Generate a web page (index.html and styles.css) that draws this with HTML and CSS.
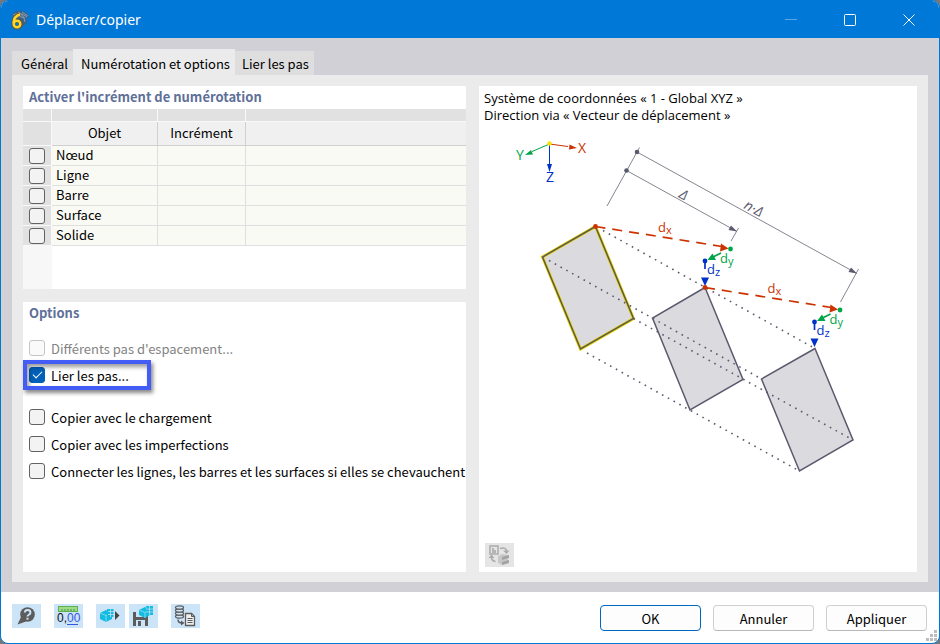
FILE: index.html
```html
<!DOCTYPE html>
<html lang="fr">
<head>
<meta charset="utf-8">
<title>Déplacer/copier</title>
<link rel="stylesheet" href="styles.css">
</head>
<body>
<div class="window">
  <header class="titlebar">
    <svg class="app-icon" viewBox="0 0 20 20" aria-hidden="true">
      <path d="M2 5 Q6 0 12 1 L17 3 L20 8 L16 7 L17 13 L12 17 L8 12 Z" fill="#3d6186"/>
      <path d="M3 5 Q9 1 17 7 M8 2 Q14 5 15 12 M4 8 Q10 5 15 8 M12 2L18 6" stroke="#8b9da8" fill="none"/>
      <path d="M9.500 4.500 Q4 6 3.500 13" stroke="#5d5630" stroke-width="4" fill="none"/>
      <circle cx="7" cy="14" r="3.500" stroke="#5d5630" stroke-width="4" fill="none"/>
      <path d="M10 4.500 Q4 6 3.500 13" stroke="#ffd52c" stroke-width="2.500" fill="none"/>
      <circle cx="7" cy="14" r="3.300" stroke="#ffd52c" stroke-width="2.500" fill="none"/>
    </svg>
    <h1>Déplacer/copier</h1>
    <div class="window-controls">
      <button type="button" aria-label="Réduire" disabled><svg viewBox="0 0 12 12"><path d="M0 5.500H12" opacity=".35"/></svg></button>
      <button type="button" aria-label="Agrandir"><svg viewBox="0 0 12 12"><rect x=".5" y=".5" width="11" height="11" rx="1"/></svg></button>
      <button type="button" aria-label="Fermer"><svg viewBox="0 0 12 12"><path d="M.5 .5L11.500 11.500M11.500 .5L.5 11.500"/></svg></button>
    </div>
  </header>

  <main class="content">
    <nav class="tabs" role="tablist">
      <button type="button" role="tab" class="tab">Général</button>
      <button type="button" role="tab" class="tab tab-active" aria-selected="true">Numérotation et options</button>
      <button type="button" role="tab" class="tab tab-last">Lier les pas</button>
    </nav>
    <div class="page">
      <div class="column">
        <section class="box">
          <h2>Activer l'incrément de numérotation</h2>
          <table class="grid">
            <colgroup><col class="col-check"><col class="col-object"><col class="col-step"><col></colgroup>
            <thead>
              <tr class="letters"><td></td><td></td><td></td><td></td></tr>
              <tr class="names"><td></td><th scope="col">Objet</th><th scope="col">Incrément</th><td></td></tr>
            </thead>
            <tbody>
              <tr><td><input type="checkbox" id="node"></td><td><label for="node">Nœud</label></td><td></td><td></td></tr>
              <tr><td><input type="checkbox" id="line"></td><td><label for="line">Ligne</label></td><td></td><td></td></tr>
              <tr><td><input type="checkbox" id="member"></td><td><label for="member">Barre</label></td><td></td><td></td></tr>
              <tr><td><input type="checkbox" id="surface"></td><td><label for="surface">Surface</label></td><td></td><td></td></tr>
              <tr><td><input type="checkbox" id="solid"></td><td><label for="solid">Solide</label></td><td></td><td></td></tr>
            </tbody>
          </table>
          <div class="grid-rest"></div>
        </section>
        <section class="box box-options">
          <h2>Options</h2>
          <div class="options">
            <label class="option option-disabled"><input type="checkbox" disabled>Différents pas d'espacement...</label>
            <label class="option option-marked"><input type="checkbox" checked>Lier les pas...</label>
          </div>
          <div class="options">
            <label class="option"><input type="checkbox">Copier avec le chargement</label>
            <label class="option"><input type="checkbox">Copier avec les imperfections</label>
            <label class="option"><input type="checkbox">Connecter les lignes, les barres et les surfaces si elles se chevauchent</label>
          </div>
        </section>
      </div>

      <section class="box preview">
        <p>Système de coordonnées « 1 - Global XYZ »</p>
        <p>Direction via « Vecteur de déplacement »</p>
        <svg class="diagram" viewBox="479 125 438 380" role="img" aria-label="Vecteur de déplacement">
          <g fill="none" stroke-width="1">
            <path d="M549.500 144L568 146.500" stroke="#cc3300"/>
            <path d="M549.500 144L532 151.500" stroke="#00a548"/>
            <path d="M549.500 144V165" stroke="#0032c8"/>
          </g>
          <path d="M577 148L569 149.500L569.500 144.500Z" fill="#cc3300"/>
          <path d="M525 155L531 150L533 154.500Z" fill="#00a548"/>
          <path d="M549.500 172L547 164H552Z" fill="#0032c8"/>
          <circle cx="549.500" cy="143.500" r="2.200" fill="#ffe000"/>
          <g class="axis-label">
            <text x="578" y="153" fill="#cc3300">X</text>
            <text x="516" y="160" fill="#00a548">Y</text>
            <text x="546" y="182" fill="#0032c8">Z</text>
          </g>

          <path d="M607 206L639.500 147.500M637 152L857 273.500M626.500 170.500L737 231.500M738.500 228L731 241M858.500 269L840.500 302" stroke="#858592" fill="none"/>
          <g fill="#5a5a6e">
            <circle cx="637" cy="152" r="2.300"/><circle cx="626.500" cy="170.500" r="2.300"/>
            <path d="M737 231.500L728.500 230L731 225.500Z"/>
            <path d="M857 273.500L848.500 272L851 267.500Z"/>
          </g>
          <g class="dim-label">
            <text transform="translate(678 197) rotate(29)">Δ</text>
            <text transform="translate(743 208) rotate(29)">n·Δ</text>
          </g>

          <path d="M595.500 226.500L542.500 257L580.500 349L633.500 318.500Z" fill="#dbdade" stroke="#ead600" stroke-width="3"/>
          <path d="M595.500 226.500L542.500 257L580.500 349L633.500 318.500Z" fill="none" stroke="#5a5a50" stroke-width="1.500"/>
          <path d="M705 287.500L652.500 318L690 410L743 379.500Z" class="copy"/>
          <path d="M815 348.500L761.500 379L799.500 471L853 440Z" class="copy"/>
          <path d="M603 230.500L815 348.500M549 260.500L761.500 379M633.500 318.500L853 440M587 353L799.500 471" class="trace"/>

          <g id="step">
            <path d="M595.500 226.500L722 246.500" stroke="#cc3300" stroke-width="1.700" stroke-dasharray="10 7" fill="none"/>
            <path d="M728.500 248.500L720 251.500L721 243.500Z" fill="#cc3300"/>
            <circle cx="595.500" cy="226.500" r="2.400" fill="#cc3300"/>
            <path d="M721 253L713 257" stroke="#00a548" stroke-width="1.700"/>
            <path d="M707.500 260L712.500 253.500L716 260Z" fill="#00a548"/>
            <circle cx="730.500" cy="249" r="2.400" fill="#00a548"/>
            <path d="M705 261V269" stroke="#0032c8" stroke-width="1.700"/>
            <path d="M705 286L701 277.500H709Z" fill="#0032c8"/>
            <circle cx="705" cy="261" r="2.400" fill="#0032c8"/>
            <g class="vector-label">
              <text x="658" y="232" fill="#cc3300">d<tspan class="sub" dy="2">x</tspan></text>
              <text x="720" y="263" fill="#00a548">d<tspan class="sub" dy="2">y</tspan></text>
              <text x="707" y="274" fill="#0032c8">d<tspan class="sub" dy="2">z</tspan></text>
            </g>
          </g>
          <use href="#step" transform="translate(109.500 61)"/>
        </svg>
        <button type="button" class="tool tool-view" aria-label="Changer l'image" disabled>
          <svg viewBox="0 0 29 24">
            <rect x="5" y="3" width="8" height="8" fill="#e5e5e5" stroke="#ababab" stroke-width="1.500"/>
            <path d="M7 10V5H9V7H11V10Z" fill="#b4b4b4"/>
            <path d="M15 5.500Q21.500 4 21.500 8M10.500 18.500Q6.500 18 6.500 14" fill="none" stroke="#ababab" stroke-width="1.500"/>
            <path d="M18 7.500H24.500L21.500 11ZM3.500 15L6.500 11.500L9.500 15Z" fill="#ababab"/>
            <path d="M13 13L17 11L23 12V20L17 22L13 20Z" fill="#c7c7c7"/>
            <path d="M17 14L24 12V15L17 17ZM17 19L24 17V20L17 22Z" fill="#a3a3a3"/>
          </svg>
        </button>
      </section>
    </div>
  </main>

  <footer class="footer">
    <div class="tools">
      <button type="button" class="tool" aria-label="Aide">
        <svg viewBox="0 0 29 24">
          <path d="M5.500 20.500L9 13L14 17.500Z" fill="#5c5c5c"/><circle cx="15.500" cy="10.500" r="7.300" fill="#5c5c5c"/>
          <path d="M12.800 8.500Q13 6 15.500 6Q18.500 6 18.500 8.500Q18.500 10 16.500 11Q15.500 11.500 15.500 12.500" fill="none" stroke="#cce4f7" stroke-width="1.900"/>
          <rect x="14.500" y="13.700" width="2" height="2" fill="#cce4f7"/>
        </svg>
      </button>
      <button type="button" class="tool" aria-label="Unités et décimales">
        <svg viewBox="0 0 29 24">
          <rect x="4.500" y="2.500" width="19" height="5" fill="#9edb8b" stroke="#5faf4d"/>
          <path d="M8 5V7M11 5V7M14 5V7M17 5V7M20 5V7" stroke="#42963b"/>
          <text x="3" y="18" class="digits" fill="#111">0,</text><text x="13" y="18" class="digits" fill="#3556df">00</text>
          <path d="M13 20.500H24" stroke="#3556df"/>
        </svg>
      </button>
      <button type="button" class="tool" aria-label="Valeurs par défaut">
        <svg viewBox="0 0 29 24">
          <path d="M4 9L10 6L16 9V15L10 18L4 15Z" fill="#13bce0"/><path d="M4 9L10 11.500L16 9M10 11.500V18" stroke="#79d9ed" fill="none"/>
          <path d="M11 5H17.500V13H11Z" fill="#13bce0"/><path d="M12 7.500H18M12 10.500H18M14.500 5V13" stroke="#cce4f7" stroke-width=".7"/>
          <path d="M19 7L23.500 11.500L19 16Z" fill="#444"/>
        </svg>
      </button>
      <button type="button" class="tool tool-joined" aria-label="Enregistrer par défaut">
        <svg viewBox="0 0 29 24">
          <path d="M4 8H17L19 10V22H4Z" fill="#5c5c5c"/><path d="M7 8H14V13H7Z" fill="#cce4f7"/><path d="M7 16H16V22H7Z" fill="#cce4f7"/><path d="M9 17H12V22H9Z" fill="#5c5c5c"/>
          <path d="M10 6L16 3L21 6V11L16 14L10 11Z" fill="#13bce0"/><path d="M10 6L16 8.500L21 6M16 8V14" stroke="#79d9ed" fill="none"/>
          <path d="M17 2H24V11H19Z" fill="#13bce0"/><path d="M17 5H24M18 8H24M20.500 2V11" stroke="#cce4f7" stroke-width=".7"/>
        </svg>
      </button>
      <button type="button" class="tool" aria-label="Copier les données">
        <svg viewBox="0 0 29 24">
          <g fill="#cce4f7" stroke="#5c5c5c" stroke-width="1.300"><ellipse cx="8.500" cy="12.500" rx="4" ry="1.600"/><ellipse cx="8.500" cy="9.500" rx="4" ry="1.600"/><ellipse cx="8.500" cy="6.500" rx="4" ry="1.600"/><ellipse cx="8.500" cy="3.500" rx="4" ry="1.600"/></g>
          <path d="M7 15.500Q7 19 11 19" fill="none" stroke="#5c5c5c" stroke-width="1.500"/><path d="M10 16.500L13.500 19L10 21.500Z" fill="#5c5c5c"/>
          <path d="M14.500 9.500H20.500L23.500 12.500V21.500H14.500Z" fill="#eee" stroke="#5c5c5c" stroke-width="1.300"/><path d="M16.500 14.500H21.500M16.500 16.500H21.500M16.500 18.500H21.500M20.500 9.500V12.500H23.500" stroke="#5c5c5c" fill="none"/>
        </svg>
      </button>
    </div>
    <div class="actions">
      <button type="button" class="action action-default">OK</button>
      <button type="button" class="action">Annuler</button>
      <button type="button" class="action">Appliquer</button>
    </div>
    <svg class="grip" viewBox="0 0 11 11" aria-hidden="true"><path d="M8 0h3v3h-3zM4 4h3v3h-3zM8 4h3v3h-3zM0 8h3v3h-3zM4 8h3v3h-3zM8 8h3v3h-3z" fill="#bdbdbd"/></svg>
  </footer>
</div>
</body>
</html>
```
FILE: styles.css
```css
* { box-sizing: border-box; }

body {
  margin: 0;
  background: #77777a;
  color: #000;
  font: 13px/17px "Noto Sans CJK JP", "Noto Sans", sans-serif;
}

h1, h2, p { margin: 0; }

button { font: inherit; color: inherit; }

.window {
  display: flex;
  flex-direction: column;
  min-height: 100vh;
  border: 1px solid #0078d4;
  border-radius: 8px;
  background: #fff;
  overflow: hidden;
}

/* Title bar */
.titlebar {
  display: flex;
  align-items: center;
  height: 37px;
  padding: 0 1px 0 9px;
  background: #0078d7;
  color: #fff;
}
.app-icon { width: 20px; height: 20px; }
.titlebar h1 { margin-left: 6px; font: 400 14px/17px "Noto Sans", sans-serif; }
.window-controls { display: flex; margin-left: auto; }
.window-controls button {
  display: grid;
  place-items: center;
  width: 59px;
  height: 36px;
  padding: 0;
  border: 0;
  background: none;
}
.window-controls svg { width: 12px; height: 12px; fill: none; stroke: #fff; }

/* Tabs and page */
.content {
  flex: 1;
  display: flex;
  flex-direction: column;
  padding: 11px 11px 10px;
  background: #d1d0d6;
}
.tabs { display: flex; align-items: flex-end; margin-bottom: -1px; }
.tab {
  height: 25px;
  padding: 0 5px 0 9px;
  border: 0;
  background: #dedede;
  white-space: nowrap;
}
.tab-active { height: 27px; padding-top: 2px; padding-left: 8px; background: #ebebeb; }
.tab-last { padding-left: 7px; }
.page {
  flex: 1;
  display: grid;
  grid-template-columns: minmax(0, 443fr) minmax(0, 438fr);
  gap: 13px;
  padding: 11px 11px 10px;
  background: #ebebeb;
}
.column { display: flex; flex-direction: column; gap: 13px; }
.box { background: #fff; }
.box-options { flex: 1; }
.box h2 {
  height: 23px;
  padding-left: 6px;
  color: #5f7099;
  font-size: 13px;
  font-weight: 700;
  line-height: 21px;
}

/* Check boxes */
input[type="checkbox"] {
  appearance: none;
  display: grid;
  place-items: center;
  flex: none;
  width: 16px;
  height: 16px;
  margin: 0;
  border: 1px solid #626262;
  border-radius: 3px;
  background: #f3f3f3;
}
input[type="checkbox"]:disabled { border-color: #c5c5c5; background: #fafafa; }
input[type="checkbox"]:checked { border-color: #005fb8; background: #005fb8; }
input[type="checkbox"]:checked::before {
  content: "";
  width: 8px;
  height: 4px;
  margin-bottom: 2px;
  border: solid #fff;
  border-width: 0 0 1px 1px;
  transform: rotate(-45deg);
}

/* Numbering table */
.grid {
  width: 100%;
  table-layout: fixed;
  border-collapse: separate;
  border-spacing: 0;
}
.col-check { width: 29px; }
.col-object { width: 106px; }
.col-step { width: 88px; }
.grid th, .grid td {
  padding: 0;
  border: solid #dfdfdf;
  border-width: 0 1px 1px 0;
  background: #fafaf4;
  font-weight: 400;
}
.grid th { padding-bottom: 2px; }
.grid tr > :last-child { border-right: 0; }
.grid .letters td { height: 13px; border-color: #f9f9f9; background: #e1e1e1; }
.grid .names > * { height: 24px; border-color: #d0d0d0; background: #f0f0f0; }
.grid tbody td { height: 20px; }
.grid tbody td:nth-child(2) { padding: 0 0 2px 4px; }
.grid tbody label { display: block; }
.grid tr > td:first-child { border-color: #f9f9f9; background: #e1e1e1; }
.grid tbody input { margin-left: 6px; }
.grid-rest { width: 29px; height: 43px; background: #f7f7f7; }

/* Options */
.options { display: flex; flex-direction: column; align-items: flex-start; padding: 10px 6px 0; }
.options + .options { padding-top: 15px; }
.option {
  display: flex;
  align-items: center;
  gap: 6px;
  height: 27px;
  white-space: nowrap;
}
.option input { margin-bottom: 2px; }
.option-disabled { color: #838383; }
.option-marked { position: relative; width: 116px; }
.option-marked::after {
  content: "";
  position: absolute;
  inset: -2px -6px -1px;
  border: 4px solid #425cf5;
  box-shadow: 2px 3px 4px #0007, inset 2px 3px 4px #0006;
  pointer-events: none;
}

/* Preview */
.preview { display: flex; flex-direction: column; padding-top: 4px; font-family: "Open Sans", "Noto Sans", sans-serif; }
.preview p { padding-left: 5px; }
.diagram { display: block; width: 100%; margin-top: 1px; }
.axis-label { font-size: 14px; }
.vector-label { font-size: 13px; }
.sub { font-size: 11px; }
.dim-label { font-size: 14px; font-style: italic; fill: #5a5a6e; }
.copy { fill: #dbdade; stroke: #5a5a6e; stroke-width: 1.5px; }
.trace { fill: none; stroke: #5a5a6e; stroke-width: 1.6px; stroke-dasharray: 1.6 5; }

/* Footer */
.tool {
  display: block;
  width: 29px;
  height: 24px;
  padding: 0;
  border: 0;
  background: #cce4f7;
}
.tool svg { display: block; width: 29px; height: 24px; }
.tool-view { margin: auto 0 5px 6px; background: #e5e5e5; }
.digits { font: 12px "Liberation Sans", sans-serif; }
.footer {
  position: relative;
  display: flex;
  justify-content: space-between;
  padding: 12px 12px 12px 11px;
}
.tools { display: flex; gap: 13px; }
.tool-joined { margin-left: -9px; }
.actions { display: flex; gap: 12px; padding-top: 1px; }
.action {
  width: 101px;
  height: 26px;
  padding: 0;
  border: 1px solid #d0d0d0;
  border-bottom-color: #b8b8b8;
  border-radius: 4px;
  background: #fdfdfd;
}
.action-default { border-color: #0067c0; }
.grip { position: absolute; right: 2px; bottom: 2px; width: 11px; height: 11px; }
```
